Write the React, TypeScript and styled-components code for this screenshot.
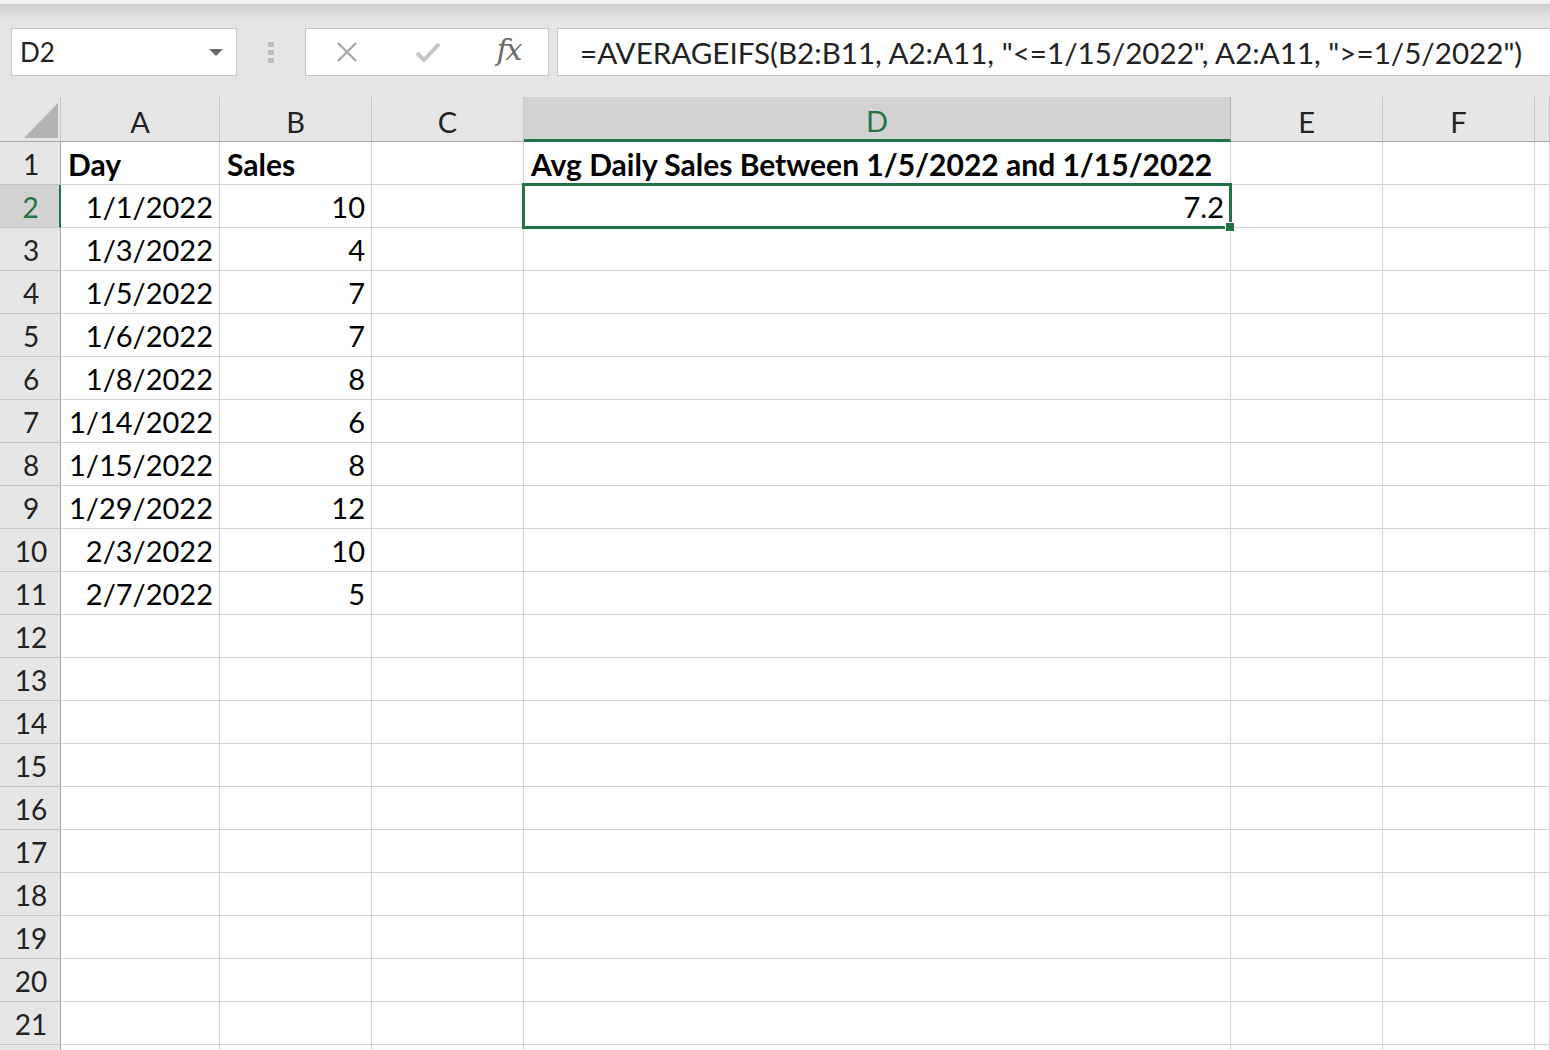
import React from 'react';
import styled, { createGlobalStyle } from 'styled-components';

const GREEN = '#217346';
const FONT = `Lato, "Open Sans", "Noto Sans", sans-serif`;

const Global = createGlobalStyle`
  html, body { margin: 0; padding: 0; background: #fff; }
  body { width: 1550px; height: 1050px; overflow: hidden; font-family: ${FONT}; }
  * { box-sizing: border-box; }
`;

const Page = styled.div`
  width: 1550px;
  height: 1050px;
  overflow: hidden;
  display: flex;
  flex-direction: column;
  background: #e6e6e6;
`;

const RibbonEdge = styled.div`
  height: 4px;
  flex: none;
  background: #f3f3f3;
`;

const FormulaBar = styled.div`
  height: 93px;
  flex: none;
  display: flex;
  align-items: flex-start;
  padding: 24px 0 0 11px;
  background: linear-gradient(#cbcbcb 0px, #dedede 10px, #e6e6e6 20px);
`;

const NameBox = styled.div`
  width: 226px;
  height: 48px;
  flex: none;
  display: flex;
  align-items: center;
  justify-content: space-between;
  padding: 0 13px 0 8px;
  background: #fff;
  border: 1px solid #c6c6c6;
  font-size: 26px;
  color: #222;
`;

const DropArrow = styled.span`
  width: 0;
  height: 0;
  border-left: 7px solid transparent;
  border-right: 7px solid transparent;
  border-top: 7px solid #6a6a6a;
`;

const Grip = styled.div`
  width: 6px;
  height: 48px;
  flex: none;
  margin: 0 31px 0 31px;
  display: flex;
  flex-direction: column;
  justify-content: center;
  gap: 3px;
`;

const GripDot = styled.span`
  width: 6px;
  height: 5px;
  background: #bdbdbd;
`;

const ButtonBox = styled.div`
  width: 244px;
  height: 48px;
  flex: none;
  display: grid;
  grid-template-columns: 81px 81px 81px;
  align-items: center;
  justify-items: center;
  background: #fff;
  border: 1px solid #c6c6c6;
`;

const Fx = styled.span`
  font-family: "DejaVu Serif", "Liberation Serif", serif;
  font-style: italic;
  font-size: 30px;
  color: #6a6a6a;
  letter-spacing: -2px;
  line-height: 1;
  margin-top: -4px;
`;

const FormulaInput = styled.div`
  flex: 1;
  height: 48px;
  margin-left: 8px;
  display: flex;
  align-items: center;
  padding-left: 22px;
  background: #fff;
  border: 1px solid #c6c6c6;
  border-right: none;
  font-size: 29.6px;
  color: #222;
  white-space: nowrap;
  overflow: hidden;
`;

const Sheet = styled.div`
  flex: 1;
  display: grid;
  grid-template-columns: 61px 159px 152px 152px 707px 152px 152px 1fr;
  grid-template-rows: 45px;
  grid-auto-rows: 43px;
  background: #fff;
  overflow: hidden;
`;

const Corner = styled.div`
  position: relative;
  background: #e6e6e6;
  border-right: 1px solid #c3c3c3;
  border-bottom: 1px solid #a8a8a8;
`;

const CornerTriangle = styled.span`
  position: absolute;
  left: 24px;
  top: 6px;
  width: 34px;
  height: 35px;
  background: #b4b4b4;
  clip-path: polygon(100% 0, 100% 100%, 0 100%);
`;

const ColHeader = styled.div<{ $active?: boolean }>`
  display: flex;
  align-items: center;
  justify-content: center;
  padding-top: 4px;
  font-size: 29px;
  color: ${(p) => (p.$active ? GREEN : '#222')};
  background: ${(p) => (p.$active ? '#d2d2d2' : '#e6e6e6')};
  border-right: 1px solid ${(p) => (p.$active ? '#ababab' : '#c6c6c6')};
  border-bottom: ${(p) => (p.$active ? `3px solid ${GREEN}` : '1px solid #a8a8a8')};
`;

const RowHeader = styled.div<{ $active?: boolean }>`
  display: flex;
  align-items: center;
  justify-content: center;
  padding: 1px 0 0 2px;
  font-size: 28px;
  color: ${(p) => (p.$active ? GREEN : '#222')};
  background: ${(p) => (p.$active ? '#d2d2d2' : '#e6e6e6')};
  border-right: ${(p) => (p.$active ? `2px solid ${GREEN}` : '1px solid #a8a8a8')};
  border-bottom: 1px solid #c6c6c6;
`;

const Cell = styled.div<{ $align?: 'left' | 'right'; $bold?: boolean }>`
  position: relative;
  display: flex;
  align-items: center;
  justify-content: ${(p) => (p.$align === 'right' ? 'flex-end' : 'flex-start')};
  padding: 1px 6px 0 7px;
  font-size: ${(p) => (p.$bold ? '30px' : '29px')};
  font-weight: ${(p) => (p.$bold ? 700 : 400)};
  color: #000;
  white-space: nowrap;
  border-right: 1px solid #d4d4d4;
  border-bottom: 1px solid #d4d4d4;
`;

const Selection = styled.span`
  position: absolute;
  left: -2px;
  top: -2px;
  right: -2px;
  bottom: -2px;
  border: 3px solid ${GREEN};
  z-index: 2;
  pointer-events: none;
`;

const FillHandle = styled.span`
  position: absolute;
  right: -6px;
  bottom: -6px;
  width: 10px;
  height: 10px;
  background: ${GREEN};
  border: 1px solid #fff;
`;

type CellData = { text?: string; align?: 'left' | 'right'; bold?: boolean; selected?: boolean };

const COLS = ['A', 'B', 'C', 'D', 'E', 'F', ''];

const data: [string, string][] = [
  ['1/1/2022', '10'],
  ['1/3/2022', '4'],
  ['1/5/2022', '7'],
  ['1/6/2022', '7'],
  ['1/8/2022', '8'],
  ['1/14/2022', '6'],
  ['1/15/2022', '8'],
  ['1/29/2022', '12'],
  ['2/3/2022', '10'],
  ['2/7/2022', '5'],
];

function buildRow(r: number): CellData[] {
  const row: CellData[] = COLS.map(() => ({}));
  if (r === 1) {
    row[0] = { text: 'Day', bold: true };
    row[1] = { text: 'Sales', bold: true };
    row[3] = { text: 'Avg Daily Sales Between 1/5/2022 and 1/15/2022', bold: true };
  } else if (r <= 11) {
    const [d, s] = data[r - 2];
    row[0] = { text: d, align: 'right' };
    row[1] = { text: s, align: 'right' };
    if (r === 2) row[3] = { text: '7.2', align: 'right', selected: true };
  }
  return row;
}

const XIcon = () => (
  <svg width="22" height="22" viewBox="0 0 22 22">
    <path d="M2 2 L20 20 M20 2 L2 20" stroke="#a8a8a8" strokeWidth="2.4" fill="none" />
  </svg>
);

const CheckIcon = () => (
  <svg width="26" height="22" viewBox="0 0 26 22">
    <path d="M2 12 L9 19 L24 3" stroke="#c4c4c4" strokeWidth="4" fill="none" />
  </svg>
);

export default function App() {
  const rows = Array.from({ length: 22 }, (_, i) => i + 1);
  return (
    <>
      <Global />
      <Page>
        <RibbonEdge />
        <FormulaBar>
          <NameBox>
            <span>D2</span>
            <DropArrow />
          </NameBox>
          <Grip>
            <GripDot />
            <GripDot />
            <GripDot />
          </Grip>
          <ButtonBox>
            <XIcon />
            <CheckIcon />
            <Fx>fx</Fx>
          </ButtonBox>
          <FormulaInput>=AVERAGEIFS(B2:B11, A2:A11, "&lt;=1/15/2022", A2:A11, "&gt;=1/5/2022")</FormulaInput>
        </FormulaBar>
        <Sheet>
          <Corner>
            <CornerTriangle />
          </Corner>
          {COLS.map((c, i) => (
            <ColHeader key={`h${i}`} $active={c === 'D'}>
              {c}
            </ColHeader>
          ))}
          {rows.map((r) => (
            <React.Fragment key={r}>
              <RowHeader $active={r === 2}>{r <= 21 ? r : ''}</RowHeader>
              {buildRow(r).map((cell, ci) => (
                <Cell key={ci} $align={cell.align} $bold={cell.bold}>
                  {cell.text}
                  {cell.selected && (
                    <Selection>
                      <FillHandle />
                    </Selection>
                  )}
                </Cell>
              ))}
            </React.Fragment>
          ))}
        </Sheet>
      </Page>
    </>
  );
}
